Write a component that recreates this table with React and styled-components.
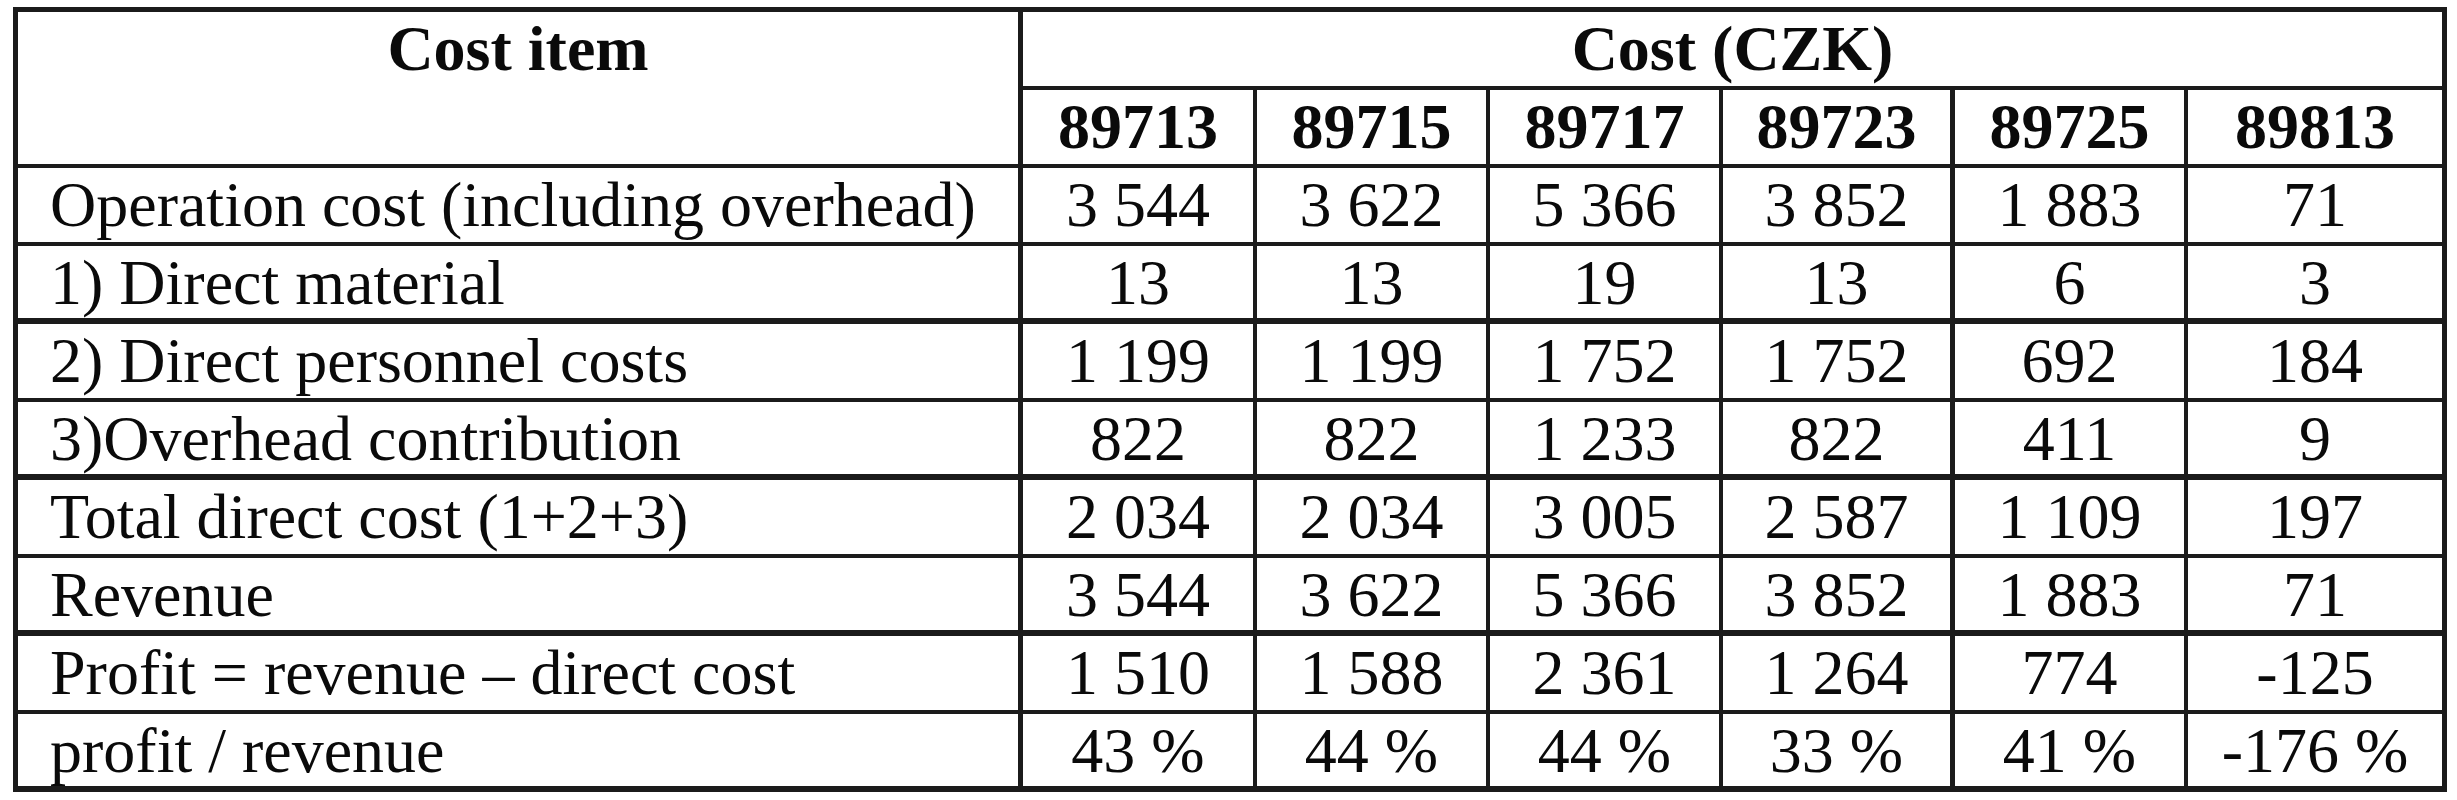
import React from 'react';
import styled, {createGlobalStyle} from 'styled-components';

const GlobalStyle = createGlobalStyle`
    html, body {
        margin:0;
        padding:0;
        background-color:#fff;
    }
`

const Page = styled.div`
    width:2457px;
    height:800px;
    padding-top:7px;
    padding-left:13px;
    box-sizing:border-box;
    background-color:#fff;
`

const Sheet = styled.div`
    display:grid;
    grid-template-columns: 1005px 234px 233px 233px 232px 233px 259px;
    grid-auto-rows: 78px;
    width:max-content;
    border-left:5px solid #1b1b1b;
    border-top:5px solid #1b1b1b;
`

const Cell = styled.div`
    box-sizing:border-box;
    border-right:${props => props.$right || 4}px solid #1b1b1b;
    border-bottom:${props => props.$bottom || 4}px solid #1b1b1b;
    grid-column:${props => props.$colSpan ? `span ${props.$colSpan}` : 'auto'};
    grid-row:${props => props.$rowSpan ? `span ${props.$rowSpan}` : 'auto'};
    padding:0 ${props => props.$pad || 0}px;
    font-family:"Liberation Serif", "Times New Roman", serif;
    font-size:64px;
    line-height:74px;
    font-weight:${props => props.$bold ? 700 : 400};
    text-align:${props => props.$align || 'center'};
    color:#0a0a0a;
    white-space:nowrap;
    overflow:hidden;
`

const colRight = [5, 4, 4, 4, 5, 4, 5];

const codes = ['89713', '89715', '89717', '89723', '89725', '89813'];

const rows = [
    {label: 'Operation cost (including overhead)', values: ['3 544', '3 622', '5 366', '3 852', '1 883', '71'], bottom: 4},
    {label: '1) Direct material', values: ['13', '13', '19', '13', '6', '3'], bottom: 6},
    {label: '2) Direct personnel costs', values: ['1 199', '1 199', '1 752', '1 752', '692', '184'], bottom: 4},
    {label: '3)Overhead contribution', values: ['822', '822', '1 233', '822', '411', '9'], bottom: 6},
    {label: 'Total direct cost (1+2+3)', values: ['2 034', '2 034', '3 005', '2 587', '1 109', '197'], bottom: 4},
    {label: 'Revenue', values: ['3 544', '3 622', '5 366', '3 852', '1 883', '71'], bottom: 6},
    {label: 'Profit = revenue \u2013 direct cost', values: ['1 510', '1 588', '2 361', '1 264', '774', '-125'], bottom: 4},
    {label: 'profit / revenue', values: ['43 %', '44 %', '44 %', '33 %', '41 %', '-176 %'], bottom: 6},
];

const nb = (text) => text.replace(/ /g, '\u00a0');

const App = () => {
    return(
        <>
            <GlobalStyle/>
            <Page>
                <Sheet>
                    <Cell $rowSpan={2} $right={colRight[0]} $bold>Cost item</Cell>
                    <Cell $colSpan={6} $right={5} $bold>Cost (CZK)</Cell>
                    {codes.map((code, i) =>
                        <Cell key={code} $right={colRight[i + 1]} $bold>{code}</Cell>
                    )}
                    {rows.map(row =>
                        <React.Fragment key={row.label}>
                            <Cell $align='left' $pad={32} $right={colRight[0]} $bottom={row.bottom}>{row.label}</Cell>
                            {row.values.map((value, i) =>
                                <Cell key={i} $right={colRight[i + 1]} $bottom={row.bottom}>{nb(value)}</Cell>
                            )}
                        </React.Fragment>
                    )}
                </Sheet>
            </Page>
        </>
    )
}

export default App;
